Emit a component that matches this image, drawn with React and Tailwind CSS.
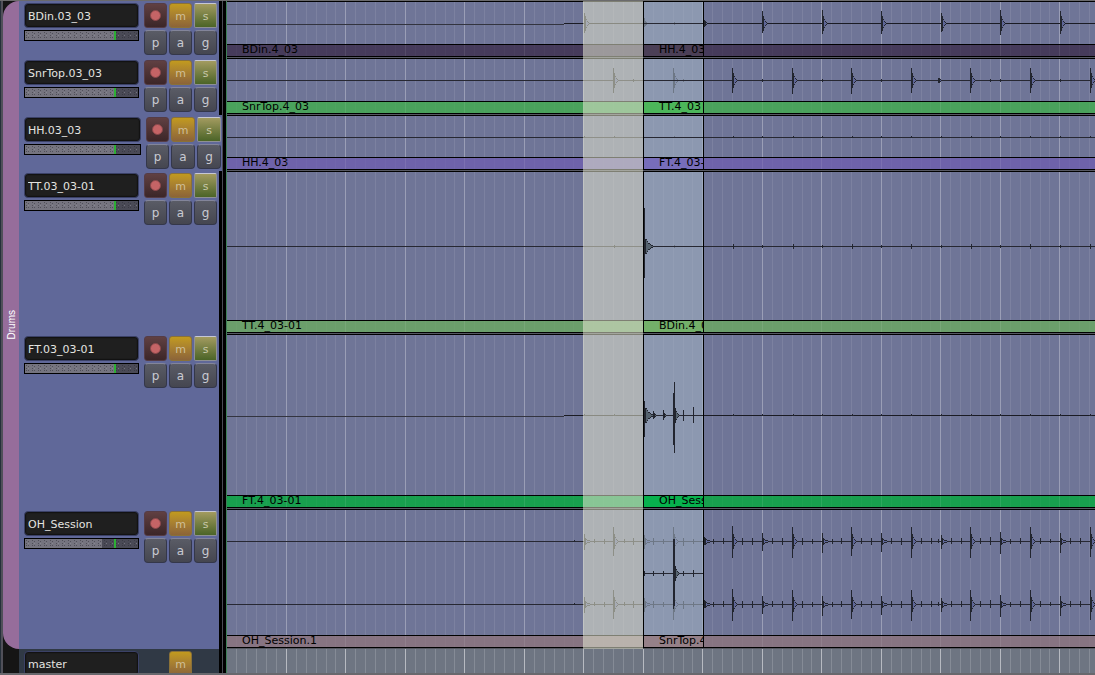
import React, { useState } from "react";

const BEAT = 59.5;
const GRID_LINES = 240;

// hits are [x, up, down, body]; x is measured from the start of the lane
const kick = [
  [357, 10, 9, 3],
  [417, 5, 3, 2],
  [447, 1, 1, 1],
  [477, 3, 3, 2],
  [535, 12, 9, 4],
  [595, 13, 10, 4],
  [654, 12, 10, 4],
  [714, 10, 8, 4],
  [773, 13, 11, 4],
  [833, 12, 10, 4],
];

const snare = [
  [386, 12, 12, 4],
  [406, 1, 1, 1],
  [446, 12, 12, 4],
  [456, 1, 1, 1],
  [505, 12, 12, 4],
  [535, 1, 1, 1],
  [565, 12, 13, 4],
  [595, 1, 1, 1],
  [624, 12, 13, 4],
  [654, 1, 1, 1],
  [684, 12, 12, 4],
  [711, 2, 2, 3],
  [743, 12, 12, 4],
  [763, 1, 1, 1],
  [773, 1, 1, 1],
  [803, 12, 12, 4],
  [833, 1, 1, 1],
  [863, 12, 12, 4],
];

const bleed = [357, 387, 447, 506, 535, 566, 595, 625, 654, 684, 714, 744, 773, 803, 833, 863].map(
  (x) => [x, 1, 0, 1]
);

const tomBleed = [387, 447, 506, 535, 566, 595, 625, 654, 684, 714, 744, 773, 803, 833, 863].map(
  (x, i) => (i > 0 && i % 2 === 0 ? [x, 2, 2, 1] : [x, 1, 1, 1])
);

const overhead = [
  [347, 1, 0, 1],
  [357, 7, 8, 5],
  [367, 2, 1, 1],
  [377, 2, 2, 1],
  [386, 14, 14, 4],
  [397, 2, 1, 1],
  [406, 3, 3, 1],
  [417, 6, 7, 5],
  [426, 3, 3, 1],
  [436, 2, 2, 1],
  [446, 14, 15, 4],
  [456, 3, 4, 1],
  [466, 2, 2, 1],
  [477, 4, 3, 5],
  [486, 2, 2, 1],
  [496, 3, 2, 1],
  [505, 15, 16, 4],
  [515, 3, 3, 1],
  [525, 3, 3, 1],
  [535, 8, 9, 6],
  [545, 3, 2, 1],
  [555, 3, 3, 1],
  [565, 14, 16, 4],
  [575, 3, 3, 1],
  [585, 2, 2, 1],
  [595, 8, 11, 6],
  [605, 2, 2, 1],
  [614, 3, 2, 1],
  [624, 14, 14, 4],
  [634, 3, 2, 1],
  [644, 3, 3, 1],
  [654, 8, 10, 6],
  [664, 3, 2, 1],
  [674, 3, 3, 1],
  [684, 14, 16, 4],
  [694, 3, 2, 1],
  [704, 3, 2, 1],
  [711, 2, 1, 1],
  [714, 6, 7, 6],
  [724, 3, 2, 1],
  [734, 3, 2, 1],
  [743, 14, 16, 4],
  [753, 3, 2, 1],
  [763, 4, 3, 1],
  [773, 9, 12, 6],
  [783, 2, 2, 1],
  [793, 3, 2, 1],
  [803, 14, 16, 4],
  [813, 3, 2, 1],
  [823, 2, 1, 1],
  [833, 8, 11, 6],
  [843, 3, 2, 1],
  [853, 3, 2, 1],
  [863, 14, 15, 4],
];

const tracks = [
  {
    name: "BDin.03_03",
    height: "h-[57px]",
    bar: "bg-[#463b5b]",
    label: "BDin.4_03",
    waves: [{ y: 21, hits: kick, step: true }],
    region: { label: "HH.4_03", bar: "bg-[#4b3f56]", y: 21, hits: [] },
  },
  {
    name: "SnrTop.03_03",
    height: "h-[57px]",
    bar: "bg-[#4aa25c]",
    label: "SnrTop.4_03",
    waves: [{ y: 21, hits: snare }],
    region: { label: "TT.4_03", bar: "bg-[#4cb65a]", y: 21, hits: [] },
  },
  {
    name: "HH.03_03",
    height: "h-[56px]",
    wide: true,
    bar: "bg-[#6e62aa]",
    label: "HH.4_03",
    waves: [{ y: 21, hits: bleed }],
    region: { label: "FT.4_03-01", bar: "bg-[#776dba]", y: 21, hits: [] },
  },
  {
    name: "TT.03_03-01",
    height: "h-[163px]",
    bar: "bg-[#6b9f6b]",
    label: "TT.4_03-01",
    waves: [{ y: 74, hits: tomBleed }],
    region: { label: "BDin.4_03", bar: "bg-[#73b069]", y: 74, hits: [[0, 38, 31, 9]] },
  },
  {
    name: "FT.03_03-01",
    height: "h-[175px]",
    bar: "bg-[#189f4e]",
    label: "FT.4_03-01",
    waves: [{ y: 80, hits: bleed, step: true }],
    region: {
      label: "OH_Session",
      bar: "bg-[#07b14d]",
      y: 80,
      hits: [
        [0, 14, 21, 9],
        [9, 4, 3, 2],
        [19, 5, 4, 2],
        [29, 22, 29, 1],
        [30, 33, 37, 4],
        [39, 5, 5, 1],
        [49, 8, 7, 1],
      ],
    },
  },
  {
    name: "OH_Session",
    height: "h-[140px]",
    level: 77,
    bar: "bg-[#877482]",
    label: "OH_Session.1",
    waves: [
      { y: 31, hits: overhead },
      { y: 94, hits: overhead },
    ],
    region: {
      label: "SnrTop.4_03",
      bar: "bg-[#958088]",
      y: 63,
      hits: [
        [0, 2, 2, 1],
        [9, 2, 2, 1],
        [19, 2, 2, 1],
        [29, 34, 35, 1],
        [30, 34, 32, 4],
        [39, 2, 2, 1],
        [49, 3, 3, 1],
      ],
    },
  },
];

const Grid = ({ className = "", minor = 0.09, major = 0.3 }) => (
  <svg
    className={`pointer-events-none absolute inset-0 h-full w-full ${className}`}
    shapeRendering="crispEdges"
    aria-hidden="true"
  >
    {Array.from({ length: GRID_LINES }, (_, i) => (
      <rect
        key={i}
        x={Math.round((i + 1) * (BEAT / 6) - 0.6)}
        y="0"
        width="1"
        height="100%"
        fill="#fff"
        opacity={(i + 1) % 6 ? minor : major}
      />
    ))}
  </svg>
);

// Half height of the ringing part at each pixel after the attack
const decay = (body, big) => {
  if (body > 6) return [7, 7, 5, 3, 3, 2, 1, 1];
  if (big) return [7, 4, 2, 1];
  if (body > 4) return [3, 2, 1, 1, 1, 0];
  return [2, 1];
};

const Hit = ({ x, y, up, down, body, fill }) => {
  const big = up > 9;
  return (
    <g>
      <rect x={x} y={y - up} width={1} height={up + down + 1} fill="#22252f" />
      {body > 1 ? (
        decay(body, big).map((h, i) => (
          <g key={i}>
            <rect x={x + 1 + i} y={y - h} width={1} height={h * 2 + 1} fill="#22252f" />
            {i > 0 && h > 0 && (
              <rect x={x + 1 + i} y={y - h + 1} width={1} height={h * 2 - 1} fill={fill} />
            )}
          </g>
        ))
      ) : (
        <rect x={x - 1} y={y} width={3} height={1} fill="#22252f" />
      )}
    </g>
  );
};

const Wave = ({ y, hits, step, fill = "#5f6798" }) => (
  <g>
    {step ? (
      <>
        <rect x="0" y={y + 1} width="337" height="1" fill="#33343f" />
        <rect x="337" y={y} width="100%" height="1" fill="#1a1b24" />
      </>
    ) : (
      <rect x="0" y={y} width="100%" height="1" fill="#272832" />
    )}
    {hits.map(([x, up, down, body], i) => (
      <Hit key={i} x={x} y={y} up={up} down={down} body={body} fill={fill} />
    ))}
  </g>
);

const Region = ({ region }) => (
  <div className="absolute inset-y-0 left-[416px] flex w-[61px] flex-col border-x border-black">
    <div className="relative flex-1 bg-[rgba(161,177,194,0.59)]">
      <svg className="absolute inset-0 h-full w-full" shapeRendering="crispEdges" aria-hidden="true">
        <Wave y={region.y} hits={region.hits} fill="#56636f" />
      </svg>
    </div>
    <div
      className={`h-[13px] overflow-hidden border-y border-black pl-[15px] text-[11px] leading-[9px] whitespace-nowrap ${region.bar}`}
    >
      {region.label}
    </div>
  </div>
);

const Lane = ({ track }) => (
  <div className="flex min-w-0 flex-1 flex-col border-l border-[#3f8058] bg-[#565862] pb-px">
    <div className="relative flex flex-1 flex-col overflow-hidden border-t border-black">
      <div className="relative flex-1 bg-[#6f7597]">
        <Grid />
        <svg className="absolute inset-0 h-full w-full" shapeRendering="crispEdges" aria-hidden="true">
          {track.waves.map((wave) => (
            <Wave key={wave.y} {...wave} />
          ))}
        </svg>
      </div>
      <div
        className={`relative h-[13px] border-y border-black pl-[15px] text-[11px] leading-[9px] whitespace-nowrap ${track.bar}`}
      >
        <Grid className="opacity-30" />
        {track.label}
      </div>
      <Region region={track.region} />
    </div>
  </div>
);

const NameBox = ({ name }) => (
  <input
    type="text"
    aria-label="Track name"
    defaultValue={name}
    className="block h-[25px] w-full rounded-sm border border-[#3b4167] bg-[#1f1f1f] px-[3px] pt-px text-[11px] text-[#e4e4e0] shadow-[inset_0_0_1px_1px_#111] outline-none"
  />
);

const Meter = ({ level, name }) => (
  <div className="relative mt-[2px] h-[11px] border border-black bg-[#4a4a56]">
    <div className="h-full bg-[#75747f]" style={{ width: `${level}px` }} />
    <svg className="absolute inset-0 h-full w-full" shapeRendering="crispEdges" aria-hidden="true">
      {Array.from({ length: 19 }, (_, i) => (
        <g key={i} fill="#2c2c34" opacity="0.5">
          <rect x={i * 6 + 1} y="1" width="1" height="1" />
          <rect x={i * 6 + 3} y="2" width="1" height="1" />
          <rect x={i * 6 + 1} y="4" width="1" height="1" />
          <rect x={i * 6 + 3} y="4" width="1" height="1" fill="#9a9aa4" />
          <rect x={i * 6 + 1} y="6" width="1" height="1" />
          <rect x={i * 6 + 3} y="6" width="1" height="1" />
        </g>
      ))}
      <rect x="89" y="0" width="2" height="9" fill="#2db035" />
    </svg>
    <input
      type="range"
      aria-label={`${name} gain`}
      defaultValue="78"
      className="absolute inset-0 m-0 h-full w-full opacity-0"
    />
  </div>
);

const MuteButton = () => {
  const [muted, setMuted] = useState(true);
  return (
    <button
      type="button"
      aria-label="Mute"
      aria-pressed={muted}
      onClick={() => setMuted(!muted)}
      className="h-[25px] rounded-[3px] border border-[#8a7138] bg-linear-to-b from-[#c29a1d] to-[#8c6438] pt-px text-[11px] leading-none text-[#d0bf9a]"
    >
      m
    </button>
  );
};

const SmallButton = ({ children, label }) => (
  <button
    type="button"
    aria-label={label}
    className="h-[25px] rounded-[4px] border border-[#34374a] border-t-[#83859a] bg-linear-to-b from-[#5a5c66] to-[#454650] pt-px text-[12px] leading-none text-[#c9cad2]"
  >
    {children}
  </button>
);

const TrackHeader = ({ track }) => (
  <div className="flex w-[207px] shrink-0 bg-black">
    <div
      className={`flex items-start gap-[5px] bg-[#606899] pt-[2px] pl-[5px] ${
        track.wide ? "w-[203px]" : "w-[200px]"
      }`}
    >
      <div className={track.wide ? "w-[117px]" : "w-[115px]"}>
        <NameBox name={track.name} />
        <Meter level={track.level || 90} name={track.name} />
      </div>
      <div
        className={`grid gap-[2px] ${
          track.wide ? "grid-cols-[23px_24px_24px]" : "grid-cols-[23px_23px_23px]"
        }`}
      >
        <button
          type="button"
          aria-label="Record enable"
          className="flex h-[25px] items-center justify-center rounded-[3px] border border-[#553c46] bg-linear-to-b from-[#604042] to-[#3c2628]"
        >
          <span className="h-[11px] w-[11px] rounded-full border border-[#8a484b] bg-[#c56466]" />
        </button>
        <MuteButton />
        <button
          type="button"
          aria-label="Solo"
          className="h-[25px] rounded-[2px] border border-[#8e9094] border-t-[#c6c7d4] bg-linear-to-b from-[#a39b60] to-[#4b6427] pt-px text-[11px] leading-none text-[#c8c8a8]"
        >
          s
        </button>
        <SmallButton label="Playlist">p</SmallButton>
        <SmallButton label="Automation">a</SmallButton>
        <SmallButton label="Group">g</SmallButton>
      </div>
    </div>
    {!track.wide && <div className="w-[3px]" />}
    <div className="w-px bg-[#4a4b55]" />
  </div>
);

export default function App() {
  return (
    <div className="flex h-screen flex-col overflow-hidden border-t border-b-2 border-t-[#6a6a6c] border-b-[#68686d] bg-[#151515] font-['DejaVu_Sans',sans-serif] text-black">
      <div className="flex min-h-0 flex-1">
        <div className="w-[3px] shrink-0 border-r-2 border-[#505059] bg-[#26303a]" />
        <div className="flex min-w-0 flex-1 flex-col">
          <div className="relative flex shrink-0">
            <div className="flex w-4 shrink-0 items-center justify-center rounded-l-2xl bg-[#966d9b] pl-[2px]">
              <span className="rotate-180 font-['Liberation_Sans',sans-serif] text-[10px] leading-[14px] text-white [writing-mode:vertical-rl]">
                Drums
              </span>
            </div>
            <div className="min-w-0 flex-1">
              {tracks.map((track) => (
                <div key={track.name} className={`flex ${track.height}`}>
                  <TrackHeader track={track} />
                  <Lane track={track} />
                </div>
              ))}
            </div>
            {/* Time selection */}
            <div className="pointer-events-none absolute inset-y-0 left-[580px] w-[60px] bg-[rgba(225,227,205,0.56)]" />
          </div>

          {/* Master bus */}
          <div className="flex min-h-0 flex-1 overflow-hidden pl-4">
            <div className="flex w-[207px] shrink-0 bg-black">
              <div className="flex w-[200px] items-start gap-[30px] bg-[#303945] pt-[2px] pl-[5px]">
                <div className="w-[115px]">
                  <NameBox name="master" />
                </div>
                <div className="grid w-[23px]">
                  <MuteButton />
                </div>
              </div>
              <div className="w-[3px]" />
              <div className="w-px bg-[#4a4b55]" />
            </div>
            <div className="relative min-w-0 flex-1 overflow-hidden border-l border-[#3f8058] bg-[#6e7582]">
              <Grid minor={0.16} major={0.5} />
            </div>
          </div>
        </div>
      </div>
    </div>
  );
}
